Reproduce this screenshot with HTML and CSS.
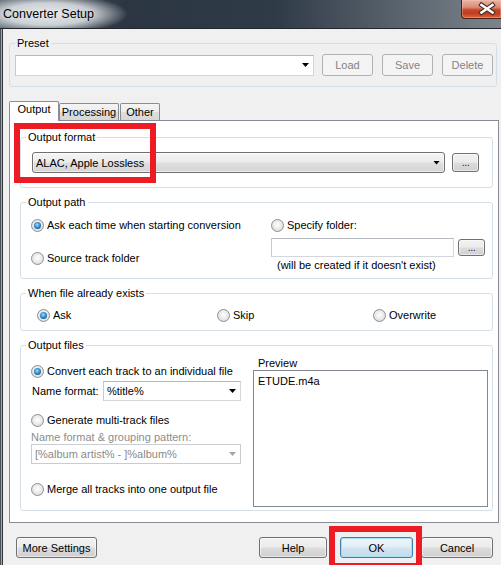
FILE: index.html
```html
<!DOCTYPE html>
<html lang="en">
<head>
    <meta charset="UTF-8">
    <meta name="viewport" content="width=device-width, initial-scale=1.0">
    <title>Converter Setup</title>
    <link rel="stylesheet" href="styles.css">
</head>
<body>
    <div class="titlebar">
        <span class="title">Converter Setup</span>
        <div class="close-button">
            <svg width="40" height="18" viewBox="0 0 40 18">
                <path d="M19.5 5 L30.5 12.5 M30.5 5 L19.5 12.5" stroke="#4a2a24" stroke-width="4.6" stroke-linecap="square"/>
                <path d="M19.5 5 L30.5 12.5 M30.5 5 L19.5 12.5" stroke="#ffffff" stroke-width="2.6" stroke-linecap="square"/>
            </svg>
        </div>
    </div>

    <div class="content">
        <fieldset class="group preset">
            <legend>Preset</legend>
            <div class="preset-body">
                <div class="combo edit preset-combo"><span></span><i class="arrow"></i></div>
                <button class="btn disabled">Load</button>
                <button class="btn disabled">Save</button>
                <button class="btn disabled">Delete</button>
            </div>
        </fieldset>

        <div class="tabs">
            <div class="tab active tab-output">Output</div>
            <div class="tab tab-processing">Processing</div>
            <div class="tab tab-other">Other</div>
        </div>

        <div class="panel">
            <fieldset class="group">
                <legend>Output format</legend>
                <div class="format-body">
                    <div class="combo list format-combo"><span>ALAC, Apple Lossless</span><i class="arrow"></i></div>
                    <button class="btn dots">...</button>
                </div>
            </fieldset>

            <fieldset class="group">
                <legend>Output path</legend>
                <div class="path-body">
                    <div class="path-left">
                        <div class="option"><span class="radio on"></span>Ask each time when starting conversion</div>
                        <div class="option second"><span class="radio"></span>Source track folder</div>
                    </div>
                    <div class="path-right">
                        <div class="option"><span class="radio"></span>Specify folder:</div>
                        <div class="folder-row">
                            <div class="textbox"></div>
                            <button class="btn dots small">...</button>
                        </div>
                        <div class="note">(will be created if it doesn't exist)</div>
                    </div>
                </div>
            </fieldset>

            <fieldset class="group">
                <legend>When file already exists</legend>
                <div class="exists-body">
                    <div class="option"><span class="radio on"></span>Ask</div>
                    <div class="option"><span class="radio"></span>Skip</div>
                    <div class="option"><span class="radio"></span>Overwrite</div>
                </div>
            </fieldset>

            <fieldset class="group">
                <legend>Output files</legend>
                <div class="files-body">
                    <div class="files-left">
                        <div class="option"><span class="radio on"></span>Convert each track to an individual file</div>
                        <div class="name-row">
                            <span>Name format:</span>
                            <div class="combo edit name-combo"><span>%title%</span><i class="arrow"></i></div>
                        </div>
                        <div class="option generate"><span class="radio"></span>Generate multi-track files</div>
                        <div class="hint">Name format &amp; grouping pattern:</div>
                        <div class="combo edit off pattern-combo"><span>[%album artist% - ]%album%</span><i class="arrow"></i></div>
                        <div class="option merge"><span class="radio"></span>Merge all tracks into one output file</div>
                    </div>
                    <div class="files-right">
                        <div class="preview-label">Preview</div>
                        <div class="preview">ETUDE.m4a</div>
                    </div>
                </div>
            </fieldset>

            <span class="mark mark-format"></span>
        </div>

        <div class="footer">
            <button class="btn more">More Settings</button>
            <button class="btn help">Help</button>
            <span class="ok-wrap">
                <button class="btn ok">OK</button>
                <span class="mark mark-ok"></span>
            </span>
            <button class="btn cancel">Cancel</button>
        </div>
    </div>
</body>
</html>
```

FILE: styles.css
```css
* {
    margin: 0;
    padding: 0;
    box-sizing: border-box;
}

body {
    width: 501px;
    height: 565px;
    overflow: hidden;
    background: #f0f0f0;
    font-family: "Liberation Sans", Arial, sans-serif;
    font-size: 11px;
    color: #000;
}

/* window frame */
.titlebar {
    height: 29px;
    display: flex;
    align-items: flex-start;
    border-bottom: 1px solid #1f252b;
    background:
        radial-gradient(ellipse 80px 20px at 48px 14px, rgba(232, 236, 239, 1) 0%, rgba(226, 230, 233, 0.85) 55%, rgba(226, 230, 233, 0) 100%),
        linear-gradient(to right, #55606b 0%, #2c3643 25%, #303b48 55%, #5a646e 80%, #7c848b 100%);
}

.title {
    font-size: 12.5px;
    line-height: 28px;
    padding-left: 3px;
}

.close-button {
    margin-left: auto;
    width: 40px;
    height: 19px;
    border: 1px solid #4f2119;
    border-top: 0;
    border-right: 0;
    border-radius: 0 0 0 4px;
    background: linear-gradient(#e9b4a7 0%, #d98b79 40%, #c5462c 55%, #c23d20 75%, #d9693c 100%);
    box-shadow: inset 0 0 0 1px rgba(255, 200, 180, 0.35);
}

.close-button svg {
    display: block;
}

.content {
    height: 536px;
    padding: 8px 2px 0 9px;
    box-shadow: inset 1px 0 0 #4a5259, inset 2px 0 0 #a3a9ae, inset 3px 0 0 #30363c;
}

/* group boxes */
.group {
    border: 1px solid #d5dfe5;
    border-radius: 3px;
    min-width: 0;
}

.group legend {
    margin-left: 5px;
    padding: 0 2px;
    line-height: 13px;
}

.preset {
    margin-right: 2px;
}

.preset-body {
    display: flex;
    align-items: center;
    padding: 4px 0 10px 5px;
}

/* controls */
.combo {
    display: flex;
    align-items: center;
    border: 1px solid #abadb3;
    background: #fff;
    padding: 0 4px 0 3px;
    white-space: nowrap;
}

.combo.edit {
    border-color: #b5b9bf #d3d7dc #d3d7dc #c7cbd0;
}

.combo.list {
    border: 1px solid #707070;
    border-radius: 3px;
    background: linear-gradient(#f5f5f5 0%, #ececec 45%, #dedede 55%, #d4d4d4 100%);
    box-shadow: inset 0 0 0 1px rgba(255, 255, 255, 0.6);
}

.combo.off {
    border-color: #c9cdd1;
    color: #8a8a8a;
}

.arrow {
    margin-left: auto;
    width: 7px;
    height: 4px;
    background: #000;
    clip-path: polygon(0 0, 100% 0, 50% 100%);
    flex: none;
}

.combo.off .arrow {
    background: #a6a6a6;
}

.btn {
    font: inherit;
    color: #000;
    border: 1px solid #707070;
    border-radius: 3px;
    background: linear-gradient(#f2f2f2 0%, #ebebeb 49%, #dddddd 51%, #cfcfcf 100%);
    box-shadow: inset 0 0 0 1px rgba(255, 255, 255, 0.55);
    flex: none;
}

.btn.disabled {
    border-color: #adb2b5;
    background: #f4f4f4;
    color: #838383;
    box-shadow: none;
}

.preset-combo {
    width: 299px;
    height: 21px;
    margin-right: 8px;
}

.preset-body .btn {
    width: 51px;
    height: 22px;
}

.preset-body .btn + .btn {
    margin-left: 9px;
}

.dots {
    width: 27px;
    height: 19px;
    line-height: 10px;
    color: #2b2b6b;
    letter-spacing: -0.5px;
    padding-bottom: 2px;
}

.dots.small {
    height: 17px;
}

/* tabs */
.tabs {
    display: flex;
    align-items: flex-end;
    height: 19px;
    margin-top: 14px;
    position: relative;
    z-index: 1;
}

.tab {
    height: 17px;
    border: 1px solid #898c95;
    border-bottom: 0;
    border-radius: 2px 2px 0 0;
    background: linear-gradient(#f4f4f4 0%, #ececec 50%, #dedede 52%, #d7d7d7 100%);
    text-align: center;
    line-height: 17px;
}

.tab.active {
    height: 20px;
    margin-bottom: -1px;
    background: #fff;
    line-height: 15px;
}

.tab-output {
    width: 50px;
}

.tab-processing {
    width: 60px;
}

.tab-other {
    width: 40px;
    margin-left: 1px;
}

.panel {
    position: relative;
    display: flex;
    flex-direction: column;
    gap: 8px;
    background: #fff;
    border: 1px solid #898c95;
    padding: 10px 5px 11px 10px;
}

/* output format */
.format-body {
    display: flex;
    align-items: center;
    padding: 8px 0 14px 11px;
}

.format-combo {
    width: 413px;
    height: 21px;
    margin-right: 7px;
}

/* radios */
.option {
    display: flex;
    align-items: center;
    gap: 3px;
    height: 16px;
    white-space: nowrap;
}

.radio {
    position: relative;
    flex: none;
    width: 13px;
    height: 13px;
    border-radius: 50%;
    border: 1px solid #8e8f8f;
    background: radial-gradient(circle at 50% 45%, #ffffff 0%, #e8e8e8 55%, #cdcdcd 100%);
}

.radio.on::after {
    content: "";
    position: absolute;
    inset: 2px;
    border-radius: 50%;
    background: radial-gradient(circle at 45% 40%, #a6e0fc 0%, #3f97d8 40%, #1b5c9e 75%, #113864 100%);
}

/* output path */
.path-body {
    display: flex;
    padding: 8px 0 6px 10px;
}

.path-left {
    width: 240px;
}

.path-left .second {
    margin-top: 17px;
}

.folder-row {
    display: flex;
    align-items: center;
    margin-top: 5px;
}

.textbox {
    width: 183px;
    height: 19px;
    border: 1px solid;
    border-color: #b5b9bf #d3d7dc #d3d7dc #c7cbd0;
    background: #fff;
    margin-right: 4px;
}

.note {
    margin-top: 1px;
    padding-left: 6px;
    line-height: 14px;
}

/* existing files */
.exists-body {
    display: grid;
    grid-template-columns: 180px 156px auto;
    padding: 7px 0 7px 16px;
}

/* output files */
.files-body {
    display: flex;
    gap: 12px;
    padding: 5px 4px 3px 10px;
}

.files-left {
    width: 210px;
    padding-top: 6px;
}

.name-row {
    display: flex;
    align-items: center;
    margin-top: 2px;
    padding-left: 1px;
}

.name-combo {
    width: 138px;
    height: 20px;
    margin-left: auto;
}

.files-left .generate {
    margin-top: 11px;
}

.hint {
    margin-top: 2px;
    line-height: 14px;
    color: #8d8d8d;
}

.pattern-combo {
    width: 210px;
    height: 20px;
}

.files-left .merge {
    margin-top: 17px;
}

.files-right {
    width: 235px;
}

.preview-label {
    padding-left: 5px;
    line-height: 13px;
}

.preview {
    height: 137px;
    border: 1px solid #828790;
    padding: 3px 4px;
    line-height: 14px;
}

/* footer */
.footer {
    display: flex;
    margin-top: 14px;
    padding: 0 6px 0 7px;
}

.footer .btn {
    height: 21px;
}

.more {
    width: 81px;
}

.help {
    width: 68px;
    margin-left: auto;
}

.ok-wrap {
    position: relative;
    margin-left: 13px;
}

.footer .ok {
    width: 73px;
    border-color: #3c7fb1;
    background: linear-gradient(#eef6fb 0%, #e2eef6 48%, #d1e4f1 52%, #c5dbea 100%);
    box-shadow: inset 0 0 0 1px #a9dcf5;
}

.cancel {
    width: 72px;
    margin-left: 8px;
}

/* annotation boxes */
.mark {
    position: absolute;
    border: 6px solid #ed1c24;
}

.mark-format {
    left: 4px;
    top: 2px;
    width: 142px;
    height: 60px;
}

.mark-ok {
    left: -11px;
    top: -11px;
    width: 93px;
    height: 43px;
}
```
